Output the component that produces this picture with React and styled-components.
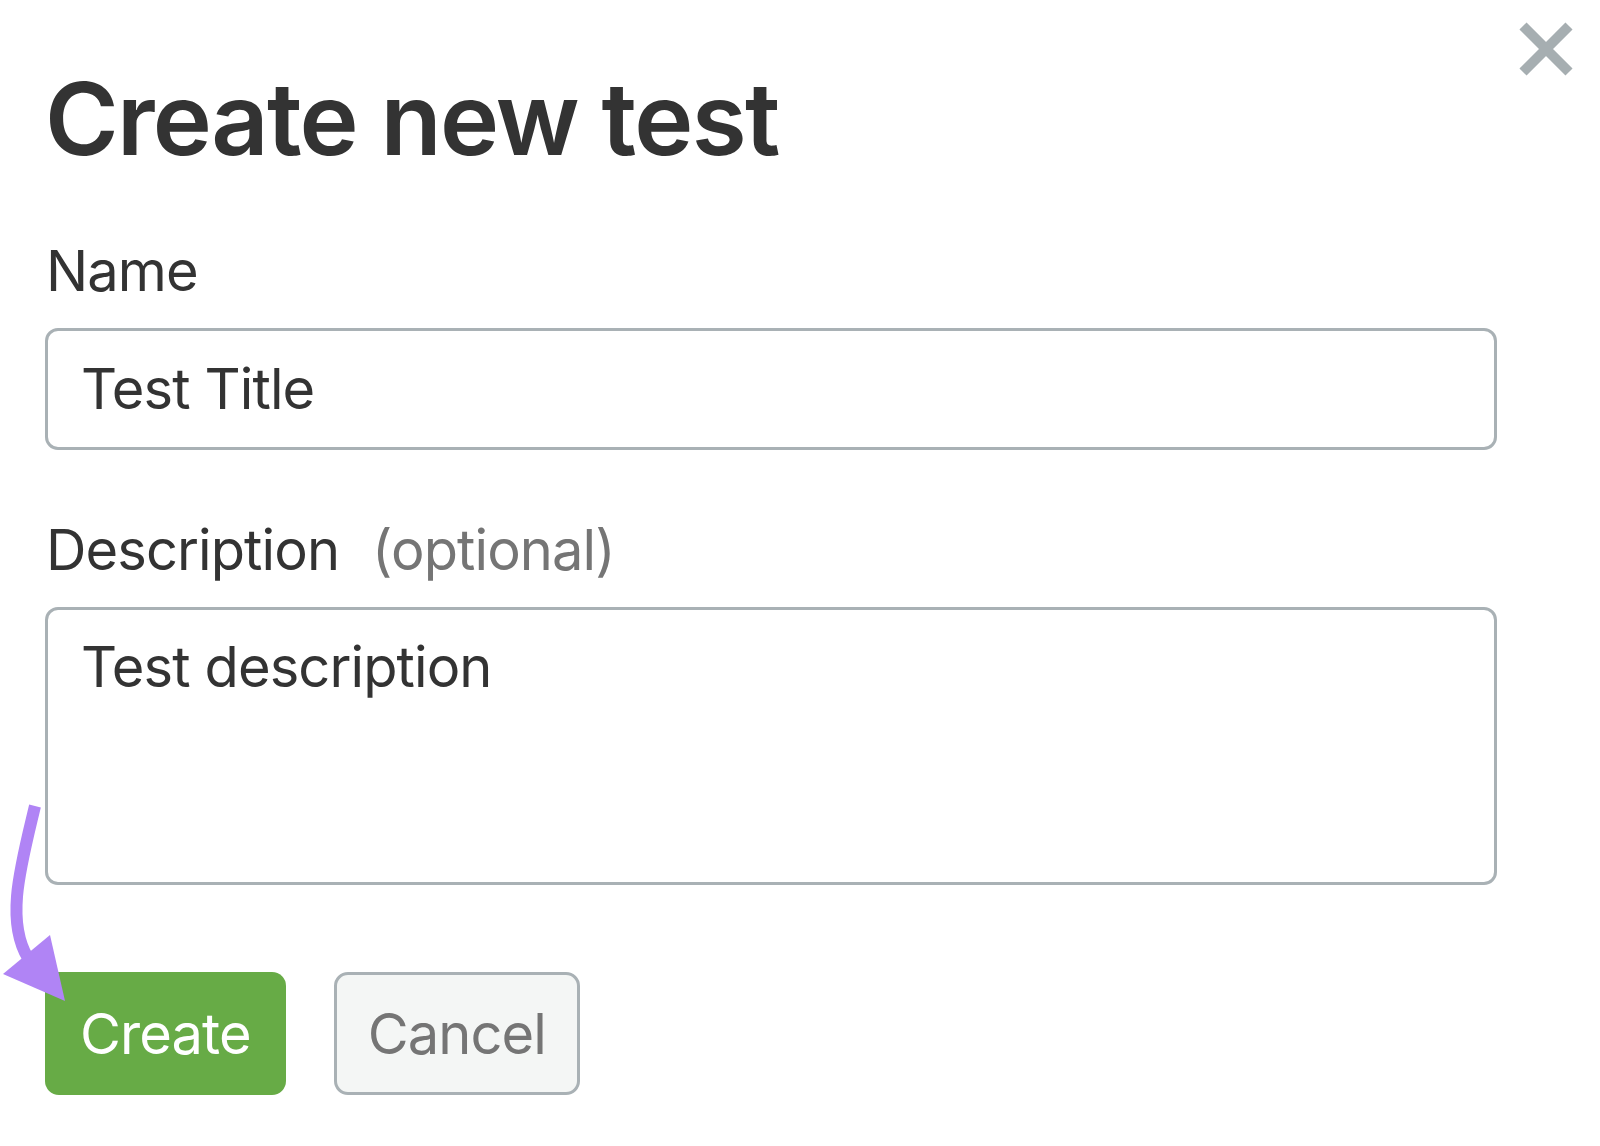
import React from "react";
import styled, { createGlobalStyle } from "styled-components";

const Global = createGlobalStyle`
  html, body {
    margin: 0;
    padding: 0;
    background: #ffffff;
  }
  body {
    font-family: Inter, "Noto Sans", "Liberation Sans", sans-serif;
    color: #333333;
  }
`;

const Dialog = styled.div`
  position: relative;
  width: 1600px;
  height: 1146px;
  box-sizing: border-box;
  padding: 69px 103px 0 45px;
  background: #ffffff;
`;

const CloseButton = styled.button`
  position: absolute;
  top: 22px;
  right: 27px;
  width: 54px;
  height: 54px;
  padding: 0;
  border: none;
  background: transparent;
  cursor: pointer;
  display: flex;
`;

const Title = styled.h1`
  margin: 0;
  font-size: 100px;
  line-height: 100px;
  font-weight: 600;
  color: #333333;
  letter-spacing: -1.7px;
`;

const Field = styled.div`
  display: flex;
  flex-direction: column;
  gap: 29px;
  margin-top: ${(p) => p.$top}px;
`;

const Label = styled.label`
  font-size: 56px;
  line-height: 56px;
  font-weight: 400;
  color: #333333;
  letter-spacing: -0.9px;
  padding-left: 1px;
`;

const Optional = styled.span`
  color: #757575;
  margin-left: 33px;
`;

const TextInput = styled.input`
  box-sizing: border-box;
  width: 100%;
  height: 122px;
  margin: 0;
  padding: 0 33px;
  border: 3px solid #a9b1b5;
  border-radius: 13px;
  background: #ffffff;
  font-family: inherit;
  font-size: 56px;
  line-height: 56px;
  letter-spacing: -0.9px;
  color: #333333;
  outline: none;
`;

const TextArea = styled.textarea`
  display: block;
  box-sizing: border-box;
  width: 100%;
  height: 278px;
  margin: 0;
  padding: 29px 33px;
  border: 3px solid #a9b1b5;
  border-radius: 13px;
  background: #ffffff;
  font-family: inherit;
  font-size: 56px;
  line-height: 56px;
  letter-spacing: -0.9px;
  color: #333333;
  resize: none;
  outline: none;
`;

const Actions = styled.div`
  display: flex;
  gap: 48px;
  margin-top: 87px;
`;

const Button = styled.button`
  box-sizing: border-box;
  height: 123px;
  padding: 0 ${(p) => (p.$primary ? 35 : 31)}px 0 ${(p) => (p.$primary ? 35 : 31)}px;
  border-radius: 14px;
  border: ${(p) => (p.$primary ? "none" : "3px solid #a9b1b5")};
  background: ${(p) => (p.$primary ? "#67ab46" : "#f4f6f5")};
  color: ${(p) => (p.$primary ? "#ffffff" : "#757575")};
  font-family: inherit;
  font-size: 56px;
  line-height: 56px;
  font-weight: 400;
  letter-spacing: -0.9px;
  cursor: pointer;
`;

const Pointer = styled.svg`
  position: absolute;
  left: 0;
  top: 790px;
  pointer-events: none;
`;

const CloseIcon = () => (
  <svg width="54" height="54" viewBox="0 0 54 54">
    <path d="M4 4 L50 50 M50 4 L4 50" stroke="#a6aeb1" strokeWidth="10" fill="none" />
  </svg>
);

export default function App() {
  return (
    <>
      <Global />
      <Dialog>
        <CloseButton aria-label="Close">
          <CloseIcon />
        </CloseButton>
        <Title>Create new test</Title>

        <Field $top={74}>
          <Label htmlFor="name">Name</Label>
          <TextInput id="name" value="Test Title" readOnly />
        </Field>

        <Field $top={72}>
          <Label htmlFor="desc">
            Description<Optional>(optional)</Optional>
          </Label>
          <TextArea id="desc" value="Test description" readOnly />
        </Field>

        <Actions>
          <Button $primary>Create</Button>
          <Button>Cancel</Button>
        </Actions>

        <Pointer width="80" height="220" viewBox="0 0 80 220">
          <path d="M35 16 C21 75, 5 130, 28 168" stroke="#b084f5" strokeWidth="12" fill="none" />
          <polygon points="65,211 3,184 50,145" fill="#b084f5" />
        </Pointer>
      </Dialog>
    </>
  );
}
